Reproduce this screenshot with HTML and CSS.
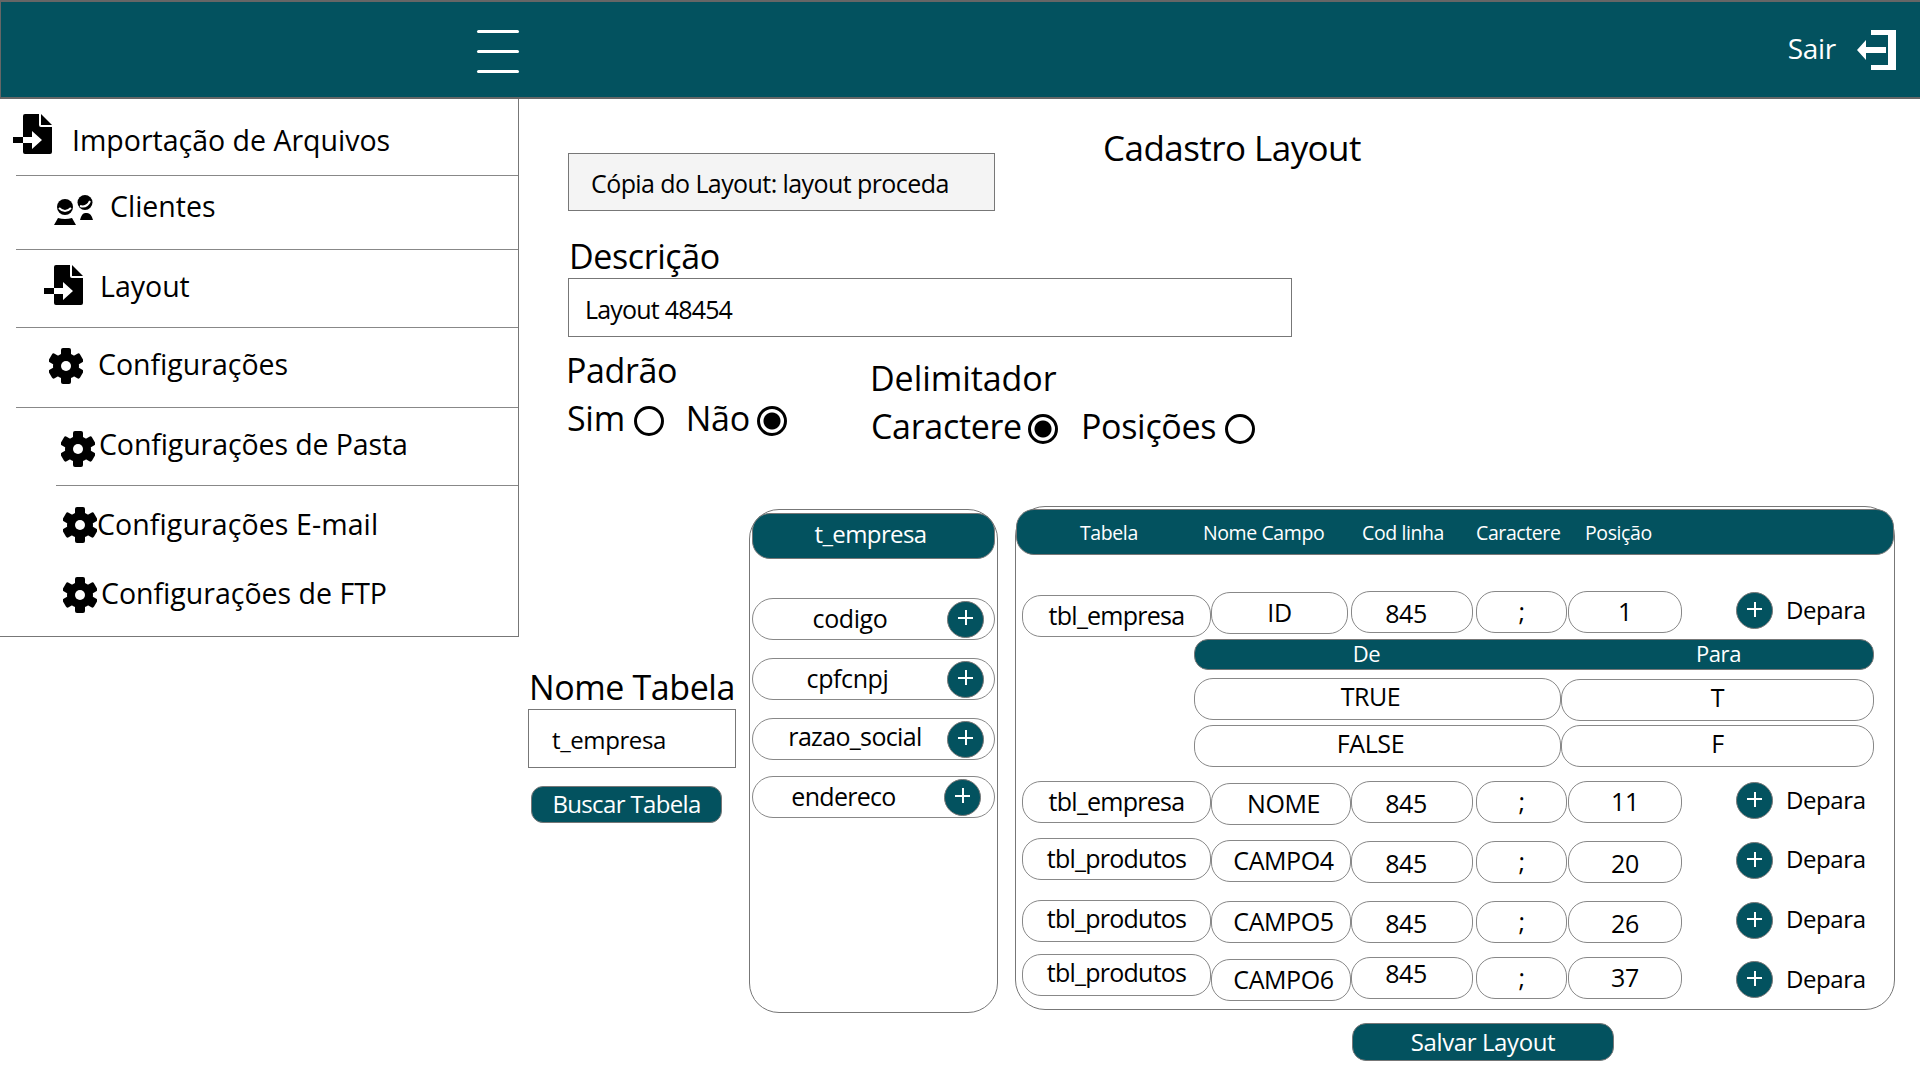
FILE: index.html
```html
<!DOCTYPE html>
<html lang="pt-BR">
<head>
<meta charset="UTF-8">
<meta name="viewport" content="width=device-width, initial-scale=1.0">
<title>Cadastro Layout</title>
<link rel="stylesheet" href="styles.css">
</head>
<body>
    <svg class="defs" width="0" height="0">
        <symbol id="i-import" viewBox="0 0 40 40">
            <path d="M10 2a2 2 0 0 1 2-2H26V11a2 2 0 0 0 2 2H39V38a2 2 0 0 1-2 2H12a2 2 0 0 1-2-2Z"/>
            <path d="M28 0L39 11H28Z"/>
            <path d="M0 23H10V29H0Z"/>
            <path fill="#fff" d="M10 23H19V17L29 26L19 35V29H10Z"/>
        </symbol>
        <symbol id="i-gear" viewBox="0 0 34 36">
            <circle cx="17" cy="18" r="13"/>
            <rect x="12" y="0" width="10" height="9" rx="2"/>
            <rect x="12" y="0" width="10" height="9" rx="2" transform="rotate(60 17 18)"/>
            <rect x="12" y="0" width="10" height="9" rx="2" transform="rotate(120 17 18)"/>
            <rect x="12" y="0" width="10" height="9" rx="2" transform="rotate(180 17 18)"/>
            <rect x="12" y="0" width="10" height="9" rx="2" transform="rotate(240 17 18)"/>
            <rect x="12" y="0" width="10" height="9" rx="2" transform="rotate(300 17 18)"/>
            <circle cx="17" cy="18" r="5" fill="#fff"/>
        </symbol>
        <symbol id="i-people" viewBox="0 0 40 30">
            <circle cx="12" cy="12" r="8"/>
            <path d="M6 13Q12 19 18 13" fill="none" stroke="#fff" stroke-width="2"/>
            <path d="M1 30L5 23Q12 25 19 23L23 30Z"/>
            <circle cx="32" cy="7.5" r="7.5"/>
            <path d="M27 11Q34 13 37 6" fill="none" stroke="#fff" stroke-width="2"/>
            <path d="M27 25Q29 17 33 18Q38 17 40 25Z"/>
        </symbol>
    </svg>

    <header class="topbar">
        <div class="burger"><span></span><span></span><span></span></div>
        <div class="logout">
            <span>Sair</span>
            <svg width="40" height="40" viewBox="0 0 40 40" fill="#fff">
                <path d="M15 0H40V40H15V35H32V5H15Z"/>
                <path d="M1 20L10 10V17H30V23H10V30Z"/>
            </svg>
        </div>
    </header>

    <div class="content">
        <aside class="sidebar">
            <div class="item item-import line">
                <svg class="icon"><use href="#i-import"/></svg>
                <span>Importação de Arquivos</span>
            </div>
            <div class="item item-clients line">
                <svg class="icon"><use href="#i-people"/></svg>
                <span>Clientes</span>
            </div>
            <div class="item item-layout line">
                <svg class="icon"><use href="#i-import"/></svg>
                <span>Layout</span>
            </div>
            <div class="item item-config line">
                <svg class="gear"><use href="#i-gear"/></svg>
                <span>Configurações</span>
            </div>
            <div class="item item-folder line">
                <svg class="gear"><use href="#i-gear"/></svg>
                <span>Configurações de Pasta</span>
            </div>
            <div class="item item-email">
                <svg class="gear"><use href="#i-gear"/></svg>
                <span>Configurações E-mail</span>
            </div>
            <div class="item item-ftp">
                <svg class="gear"><use href="#i-gear"/></svg>
                <span>Configurações de FTP</span>
            </div>
        </aside>

        <main class="main">
            <div class="title-row">
                <div class="copy-box">Cópia do Layout: layout proceda</div>
                <h1>Cadastro Layout</h1>
            </div>

            <label class="big-label desc-label">Descrição</label>
            <div class="desc-box">Layout 48454</div>

            <div class="options">
                <div class="opt-padrao">
                    <div class="big-label">Padrão</div>
                    <div class="radios">
                        <span>Sim</span><i class="radio r-sim"></i>
                        <span class="nao">Não</span><i class="radio checked r-nao"></i>
                    </div>
                </div>
                <div class="opt-delim">
                    <div class="big-label">Delimitador</div>
                    <div class="radios">
                        <span>Caractere</span><i class="radio checked r-car"></i>
                        <span class="pos">Posições</span><i class="radio r-pos"></i>
                    </div>
                </div>
            </div>

            <div class="tables">
                <div class="search">
                    <div class="big-label">Nome Tabela</div>
                    <div class="search-box">t_empresa</div>
                    <button class="btn btn-search" type="button">Buscar Tabela</button>
                </div>

                <section class="panel fields">
                    <div class="fields-head">t_empresa</div>
                    <div class="field f-codigo"><span>codigo</span><i class="plus"></i></div>
                    <div class="field f-cpf"><span>cpfcnpj</span><i class="plus"></i></div>
                    <div class="field f-razao"><span>razao_social</span><i class="plus"></i></div>
                    <div class="field f-end"><span>endereco</span><i class="plus"></i></div>
                </section>

                <div class="right">
                    <section class="panel mapping">
                        <div class="map-head">
                            <span class="h-tab">Tabela</span>
                            <span class="h-nome">Nome Campo</span>
                            <span class="h-cod">Cod linha</span>
                            <span class="h-car">Caractere</span>
                            <span>Posição</span>
                        </div>

                        <div class="row row-first">
                            <div class="pill tbl o4">tbl_empresa</div>
                            <div class="pill o1 w-id">ID</div>
                            <div class="pill w-num">845</div>
                            <div class="pill w-sep">;</div>
                            <div class="pill">1</div>
                            <i class="plus o1"></i>
                            <span class="depara">Depara</span>
                        </div>

                        <div class="depara-box">
                            <div class="depara-head"><span class="de">De</span><span>Para</span></div>
                            <div class="depara-row">
                                <div class="pill pad-r">TRUE</div>
                                <div class="pill o1">T</div>
                            </div>
                            <div class="depara-row">
                                <div class="pill pad-r">FALSE</div>
                                <div class="pill">F</div>
                            </div>
                        </div>

                        <div class="row row-nome">
                            <div class="pill tbl">tbl_empresa</div>
                            <div class="pill campo o2">NOME</div>
                            <div class="pill w-num">845</div>
                            <div class="pill w-sep">;</div>
                            <div class="pill">11</div>
                            <i class="plus o1"></i>
                            <span class="depara">Depara</span>
                        </div>
                        <div class="row row-c4">
                            <div class="pill tbl">tbl_produtos</div>
                            <div class="pill campo o2">CAMPO4</div>
                            <div class="pill w-num o3">845</div>
                            <div class="pill w-sep o3">;</div>
                            <div class="pill o3 text-low">20</div>
                            <i class="plus o4"></i>
                            <span class="depara d-c4">Depara</span>
                        </div>
                        <div class="row row-c5">
                            <div class="pill tbl text-high">tbl_produtos</div>
                            <div class="pill campo o1">CAMPO5</div>
                            <div class="pill w-num o1">845</div>
                            <div class="pill w-sep o1">;</div>
                            <div class="pill o1 text-low">26</div>
                            <i class="plus o2"></i>
                            <span class="depara">Depara</span>
                        </div>
                        <div class="row">
                            <div class="pill tbl text-high">tbl_produtos</div>
                            <div class="pill campo o5">CAMPO6</div>
                            <div class="pill w-num o3 text-up">845</div>
                            <div class="pill w-sep o3">;</div>
                            <div class="pill o3">37</div>
                            <i class="plus o7"></i>
                            <span class="depara d-low">Depara</span>
                        </div>
                    </section>
                    <button class="btn btn-save" type="button">Salvar Layout</button>
                </div>
            </div>
        </main>
    </div>
</body>
</html>
```

FILE: styles.css
```css
body {
    margin: 0;
    width: 1920px;
    height: 1080px;
    overflow: hidden;
    background-color: #fff;
    color: #000;
    font-family: "Open Sans", "Liberation Sans", sans-serif;
}
.defs {
    display: block;
    height: 0;
}

/* top bar */
.topbar {
    box-sizing: border-box;
    height: 99px;
    display: flex;
    align-items: center;
    justify-content: space-between;
    padding: 0 24px 0 476px;
    background-color: #03525f;
    border: 1px solid #666;
    border-width: 2px 0 2px 1px;
}
.burger {
    display: flex;
    flex-direction: column;
    gap: 17px;
    margin-top: 3px;
}
.burger span {
    display: block;
    width: 42px;
    height: 3px;
    border-radius: 2px;
    background-color: #fff;
}
.logout {
    display: flex;
    align-items: center;
    gap: 20px;
    color: #fff;
    font-size: 28px;
    letter-spacing: -0.3px;
}
.logout span {
    margin-top: -4px;
}

.content {
    display: flex;
}

/* sidebar */
.sidebar {
    box-sizing: border-box;
    width: 519px;
    height: 538px;
    flex: none;
    border-right: 1px solid #777;
    border-bottom: 1px solid #777;
}
.item {
    box-sizing: border-box;
    display: flex;
    align-items: flex-start;
    margin-left: 16px;
    font-size: 28.5px;
    line-height: 40px;
}
.line {
    border-bottom: 1px solid #888;
}
.icon {
    width: 40px;
    height: 40px;
    flex: none;
}
.gear {
    width: 34px;
    height: 36px;
    flex: none;
}
.item-import {
    height: 77px;
    padding-top: 15px;
}
.item-import .icon {
    margin-left: -3px;
    margin-right: 19px;
}
.item-import span {
    margin-top: 6px;
}
.item-clients {
    height: 74px;
    padding: 19px 0 0 37px;
}
.item-clients .icon {
    height: 30px;
    margin-right: 17px;
}
.item-clients span {
    margin-top: -9px;
}
.item-layout {
    height: 78px;
    padding: 15px 0 0 28px;
}
.item-layout .icon {
    margin-right: 16px;
}
.item-layout span {
    margin-top: 1px;
}
.item-config {
    height: 80px;
    padding: 20px 0 0 33px;
}
.item-config .gear {
    margin-right: 15px;
}
.item-config span {
    margin-top: -4px;
}
.item-folder {
    height: 78px;
    margin-left: 56px;
    padding: 23px 0 0 5px;
    letter-spacing: -0.1px;
}
.item-folder .gear {
    margin-right: 4px;
}
.item-folder span {
    margin-top: -7px;
}
.item-email {
    height: 70px;
    margin-left: 63px;
    padding-top: 21px;
    letter-spacing: 0.1px;
}
.item-email span {
    margin-top: -3px;
}
.item-ftp {
    height: 70px;
    margin-left: 63px;
    padding-top: 21px;
}
.item-ftp .gear {
    margin-right: 4px;
}
.item-ftp span {
    margin-top: -4px;
}

/* main area */
.main {
    flex: 1;
    min-width: 0;
}
.big-label {
    font-size: 34px;
    line-height: 42px;
    letter-spacing: -0.4px;
}
.title-row {
    display: flex;
    align-items: flex-start;
    padding: 30px 0 0 49px;
}
.copy-box {
    box-sizing: border-box;
    width: 427px;
    height: 58px;
    margin-top: 24px;
    padding-left: 22px;
    background-color: #f4f4f4;
    border: 1px solid #777;
    font-size: 25px;
    line-height: 58px;
    letter-spacing: -0.58px;
}
h1 {
    margin: 0 0 0 108px;
    font-size: 35px;
    font-weight: 400;
    line-height: 38px;
    letter-spacing: -0.55px;
}
.desc-label {
    display: block;
    margin: 24px 0 1px 50px;
}
.desc-box {
    box-sizing: border-box;
    width: 724px;
    height: 59px;
    margin-left: 49px;
    padding-left: 16px;
    border: 1px solid #777;
    font-size: 25px;
    line-height: 60px;
    letter-spacing: -0.8px;
}
.options {
    display: flex;
    align-items: flex-start;
    height: 157px;
    padding: 12px 0 0 47px;
}
.opt-padrao {
    width: 304px;
}
.opt-padrao .radios {
    margin-left: 1px;
}
.opt-delim {
    padding-top: 8px;
}
.opt-delim .big-label {
    letter-spacing: -0.05px;
}
.opt-delim .radios {
    margin-left: 1px;
}
.radios {
    display: flex;
    align-items: center;
    margin-top: 7px;
    font-size: 34px;
    line-height: 40px;
    letter-spacing: -0.3px;
}
.radio {
    box-sizing: border-box;
    width: 30px;
    height: 30px;
    border: 3px solid #000;
    border-radius: 50%;
    margin-top: 6px;
}
.checked {
    background: radial-gradient(circle, #000 0 8px, #fff 9px);
}
.r-sim { margin-left: 9px; }
.r-nao { margin-left: 7px; }
.r-car { margin-left: 6px; margin-top: 6px; }
.r-pos { margin-left: 9px; margin-top: 6px; }
.nao { margin-left: 22px; }
.pos { margin-left: 23px; }

.tables {
    display: flex;
    align-items: flex-start;
}
.search {
    width: 208px;
    margin: 160px 0 0 9px;
    flex: none;
}
.search .big-label {
    margin-left: 1px;
    white-space: nowrap;
}
.search-box {
    box-sizing: border-box;
    height: 59px;
    margin-top: 1px;
    padding-left: 23px;
    border: 1px solid #777;
    font-size: 24px;
    line-height: 60px;
    letter-spacing: -0.4px;
}
.btn {
    display: block;
    padding: 0 0 2px;
    background-color: #03525f;
    border: 1px solid #777;
    color: #fff;
    font-family: inherit;
    font-size: 24px;
    letter-spacing: -0.4px;
}
.btn-search {
    width: 191px;
    height: 37px;
    margin: 18px 0 0 3px;
    border-radius: 12px;
    letter-spacing: -0.65px;
}
.btn-save {
    width: 262px;
    height: 38px;
    margin: 13px 0 0 337px;
    border-radius: 14px;
}

.panel {
    box-sizing: border-box;
    height: 504px;
    border: 1px solid #777;
    border-radius: 30px;
}
.fields {
    width: 249px;
    margin: 3px 0 0 13px;
    padding: 3px 2px;
    flex: none;
}
.fields-head {
    box-sizing: border-box;
    height: 46px;
    margin-bottom: 39px;
    padding-right: 6px;
    background-color: #03525f;
    border: 1px solid #777;
    border-radius: 18px;
    color: #fff;
    font-size: 24px;
    line-height: 39px;
    letter-spacing: -0.6px;
    text-align: center;
}
.field {
    box-sizing: border-box;
    display: flex;
    align-items: center;
    height: 42px;
    margin-bottom: 18px;
    border: 1px solid #888;
    border-radius: 21px;
    font-size: 25px;
    letter-spacing: -0.4px;
}
.field span {
    flex: 1;
    text-align: center;
    line-height: 34px;
    height: 36px;
}
.field .plus {
    margin-right: 10px;
}
.f-cpf span { padding-right: 5px; }
.f-razao span { padding-left: 10px; letter-spacing: -0.65px; line-height: 31px; }
.f-razao { margin-bottom: 17px; }
.f-end .plus { margin-right: 13px; }
.f-end span { padding-right: 10px; letter-spacing: -0.7px; }
.f-end { margin-top: -1px; }

.plus {
    position: relative;
    box-sizing: border-box;
    display: block;
    width: 37px;
    height: 37px;
    flex: none;
    background-color: #03525f;
    border: 1px solid #777;
    border-radius: 50%;
}
.plus::before,
.plus::after {
    content: "";
    position: absolute;
    background-color: #fff;
}
.plus::before {
    left: 10px;
    top: 15px;
    width: 15px;
    height: 2px;
}
.plus::after {
    left: 16.5px;
    top: 8.5px;
    width: 2px;
    height: 15px;
}

.right {
    flex: none;
    margin-left: 17px;
}
.mapping {
    width: 880px;
    padding-top: 2px;
}
.map-head {
    box-sizing: border-box;
    display: flex;
    align-items: center;
    height: 46px;
    padding-left: 63px;
    background-color: #03525f;
    border: 1px solid #777;
    border-radius: 18px;
    color: #fff;
    font-size: 19.5px;
    letter-spacing: -0.4px;
}
.h-tab { width: 123px; }
.h-nome { width: 159px; }
.h-cod { width: 114px; }
.h-car { width: 109px; }

.row {
    display: grid;
    grid-template-columns: 189px 140px 125px 92px 114px 91px auto;
    align-items: start;
    margin-left: 6px;
}
.row-first {
    margin-top: 36px;
    margin-bottom: 2px;
}
.row-nome { margin-bottom: 13px; }
.row-c4 { margin-bottom: 17px; }
.row-c5 { margin-bottom: 11px; }

.pill {
    box-sizing: border-box;
    height: 42px;
    border: 1px solid #888;
    border-radius: 19px;
    font-size: 25px;
    line-height: 39px;
    letter-spacing: -0.4px;
    text-align: center;
}
.tbl {
    letter-spacing: -0.75px;
    line-height: 38px;
}
.campo {
    padding-left: 5px;
}
.row .plus {
    margin-left: 54px;
}
.depara {
    margin-left: 13px;
    font-size: 24px;
    line-height: 38px;
    letter-spacing: -0.4px;
}
.d-c4 { margin-top: 2px; }
.d-low { margin-top: 6px; }
.w-id { width: 137px; }
.w-num { width: 122px; padding-right: 12px; line-height: 42px; }
.w-sep { width: 91px; }
.text-up { line-height: 30px; }
.text-low { line-height: 42px; }
.text-high { line-height: 35px; }
.o1 { margin-top: 1px; }
.o2 { margin-top: 2px; }
.o3 { margin-top: 3px; }
.o4 { margin-top: 4px; }
.o5 { margin-top: 5px; }
.o7 { margin-top: 7px; }

.depara-box {
    width: 680px;
    margin: 0 0 14px 178px;
}
.depara-head {
    box-sizing: border-box;
    display: grid;
    grid-template-columns: 367px 313px;
    height: 31px;
    margin-bottom: 8px;
    background-color: #03525f;
    border: 1px solid #777;
    border-radius: 14px;
    color: #fff;
    font-size: 22px;
    line-height: 27px;
    letter-spacing: -0.4px;
    text-align: center;
}
.de {
    padding-right: 24px;
}
.depara-row {
    display: grid;
    grid-template-columns: 367px 313px;
    align-items: start;
    margin-bottom: 4px;
}
.depara-row .pill {
    line-height: 34px;
}
.pad-r {
    padding-right: 14px;
}
```
